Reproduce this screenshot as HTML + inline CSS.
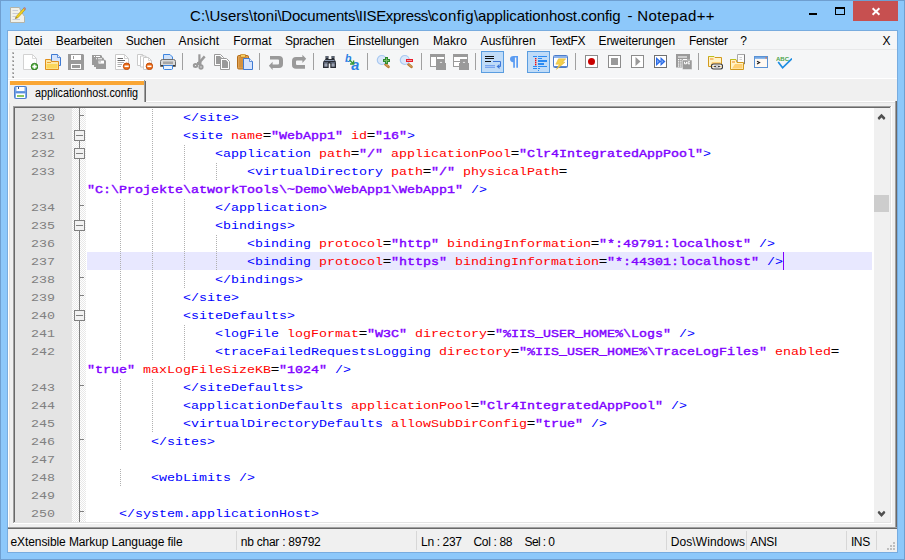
<!DOCTYPE html><html><head><meta charset="utf-8"><title>Notepad++</title><style>

html,body{margin:0;padding:0;}
body{width:905px;height:560px;overflow:hidden;background:#8dc8fa;font-family:"Liberation Sans",sans-serif;}
#win{position:absolute;left:0;top:0;width:905px;height:560px;background:#8dc8fa;overflow:hidden;}
.abs,#win div,#win span.a,#win svg{position:absolute;}
.t{white-space:pre;color:#000;}
#menubar{left:8px;top:31px;width:889px;height:19px;background:#f5f6f7;}
#toolbar{left:8px;top:50px;width:889px;height:28px;background:#f5f6f7;}
#tabbar{left:8px;top:78px;width:889px;height:474px;background:#f0f0f0;}
.m{top:3px;font-size:12px;line-height:15px;white-space:pre;color:#000;}
.sep{top:3px;width:1px;height:17px;background:#a0a0a0;}
.chk{top:1px;width:21px;height:20px;border:1px solid #5a9de0;background:#c0dcf8;}
#ed{left:13px;top:106px;width:879px;height:418px;background:#fff;box-sizing:border-box;}
.row{transform:scaleY(.86);transform-origin:0 12px;left:0;height:18px;width:859px;font-family:"Liberation Mono",monospace;font-size:13.333px;line-height:18px;white-space:pre;color:#000;}
.ln{transform:scaleY(.86);transform-origin:0 12px;left:0;width:40px;text-align:right;color:#808080;font-family:"Liberation Mono",monospace;font-size:13.333px;line-height:18px;height:18px;}
.g{color:#00f}.r{color:#f00}.p{color:#8000ff;-webkit-text-stroke:0.45px #8000ff}.k{color:#000;-webkit-text-stroke:0.45px #000}
.ig{width:1px;height:18px;background:repeating-linear-gradient(to bottom,transparent 0,transparent 1px,#b0b0b0 1px,#b0b0b0 2px);}
.st{top:6px;font-size:12px;line-height:15px;white-space:pre;color:#000;}
.ss{top:2px;width:1px;height:19px;background:#d7d7d7;}

</style></head><body><div id="win">
<div style="left:0;top:0;width:905px;height:1px;background:#6f9fd0"></div>
<div style="left:0;top:0;width:1px;height:560px;background:#6f9fd0"></div>
<div style="left:904px;top:0;width:1px;height:560px;background:#6f9fd0"></div>
<div style="left:0;top:559px;width:905px;height:1px;background:#6f9fd0"></div>
<div style="left:7px;top:30px;width:891px;height:523px;background:#78acdf"></div>
<svg style="left:10px;top:7px" width="16" height="16" viewBox="0 0 16 16"><path d="M0.5 0.5H9.5L10.5 3.5L14.5 9.5V15.5H0.5Z" fill="#f1f1ea" stroke="#b4b4a8" stroke-width="1"/><path d="M2.5 3.5H8M2.5 6.5H9M2.5 9.5H6M2.5 12.5H10" stroke="#c9ccd6" stroke-width="1"/><path d="M5.4 11.6L6.5 9.1L13.6 1.3L15.2 2.7L8 10.7Z" fill="#f2d21e" stroke="#9a7a18" stroke-width="0.5"/><path d="M13.6 1.3L14.5 0.3L16 1.7L15.2 2.7Z" fill="#d88a8a" stroke="#a06060" stroke-width="0.4"/><path d="M5.4 11.6L5.9 10.3L6.7 11Z" fill="#3a2a1a"/></svg>
<div class="t" style="left:190.1px;top:7px;font-size:15px;line-height:18px;letter-spacing:0.06px">C:\Users\toni\</div>
<div class="t" style="left:281.3px;top:7px;font-size:15px;line-height:18px;letter-spacing:-0.203px">Documents\</div>
<div class="t" style="left:358.8px;top:7px;font-size:15px;line-height:18px;letter-spacing:-0.336px">IISExpress\</div>
<div class="t" style="left:431.3px;top:7px;font-size:15px;line-height:18px;letter-spacing:0.429px">config\</div>
<div class="t" style="left:478.0px;top:7px;font-size:15px;line-height:18px;letter-spacing:-0.076px">applicationhost.config</div>
<div class="t" style="left:627.6px;top:7px;font-size:15px;line-height:18px;letter-spacing:0px">-</div>
<div class="t" style="left:637.3px;top:7px;font-size:15px;line-height:18px;letter-spacing:0.385px">Notepad++</div>
<div style="left:809px;top:13px;width:8px;height:2px;background:#000"></div>
<div style="left:835px;top:7px;width:10px;height:8px;box-sizing:border-box;border:1px solid #000;border-top-width:2px"></div>
<div style="left:853px;top:1px;width:45px;height:20px;background:#c75050"></div>
<svg style="left:871px;top:7px" width="10" height="9" viewBox="0 0 10 9"><path d="M1.6 1.2L8.4 7.8M8.4 1.2L1.6 7.8" stroke="#fff" stroke-width="1.9" fill="none"/></svg>
<div id="menubar">
<div class="m" style="left:6.7px;letter-spacing:-0.083px">Datei</div>
<div class="m" style="left:47.8px;letter-spacing:-0.164px">Bearbeiten</div>
<div class="m" style="left:117.8px;letter-spacing:-0.217px">Suchen</div>
<div class="m" style="left:170.5px;letter-spacing:0.207px">Ansicht</div>
<div class="m" style="left:225.2px;letter-spacing:0.066px">Format</div>
<div class="m" style="left:277.1px;letter-spacing:-0.296px">Sprachen</div>
<div class="m" style="left:340.1px;letter-spacing:-0.112px">Einstellungen</div>
<div class="m" style="left:424.9px;letter-spacing:0.172px">Makro</div>
<div class="m" style="left:472.6px;letter-spacing:0.044px">Ausführen</div>
<div class="m" style="left:542.0px;letter-spacing:-0.357px">TextFX</div>
<div class="m" style="left:590.5px;letter-spacing:-0.068px">Erweiterungen</div>
<div class="m" style="left:680.9px;letter-spacing:-0.269px">Fenster</div>
<div class="m" style="left:732.3px;letter-spacing:-0.374px">?</div>
<div class="m" style="left:874.5px;letter-spacing:0.296px">X</div>
</div>
<div style="left:8px;top:49px;width:889px;height:1px;background:#e8e9ea"></div>
<div id="toolbar">
<div style="left:4px;top:2px;width:2px;height:2px;background:#bdbdbd"></div>
<div style="left:5px;top:3px;width:1px;height:1px;background:#8c8c8c"></div>
<div style="left:4px;top:6px;width:2px;height:2px;background:#bdbdbd"></div>
<div style="left:5px;top:7px;width:1px;height:1px;background:#8c8c8c"></div>
<div style="left:4px;top:10px;width:2px;height:2px;background:#bdbdbd"></div>
<div style="left:5px;top:11px;width:1px;height:1px;background:#8c8c8c"></div>
<div style="left:4px;top:14px;width:2px;height:2px;background:#bdbdbd"></div>
<div style="left:5px;top:15px;width:1px;height:1px;background:#8c8c8c"></div>
<div style="left:4px;top:18px;width:2px;height:2px;background:#bdbdbd"></div>
<div style="left:5px;top:19px;width:1px;height:1px;background:#8c8c8c"></div>
<div style="left:4px;top:22px;width:2px;height:2px;background:#bdbdbd"></div>
<div style="left:5px;top:23px;width:1px;height:1px;background:#8c8c8c"></div>
<div style="left:4px;top:26px;width:2px;height:2px;background:#bdbdbd"></div>
<div style="left:5px;top:27px;width:1px;height:1px;background:#8c8c8c"></div>
<div class="chk" style="left:473px"></div>
<div class="chk" style="left:519px"></div>
<div class="sep" style="left:174px"></div>
<div class="sep" style="left:251px"></div>
<div class="sep" style="left:305px"></div>
<div class="sep" style="left:359px"></div>
<div class="sep" style="left:413px"></div>
<div class="sep" style="left:467px"></div>
<div class="sep" style="left:567px"></div>
<div class="sep" style="left:690px"></div>
<svg style="left:14px;top:4px" width="16" height="16" viewBox="0 0 16 16"><path d="M1.5 0.5H10.5L14.5 4.5V15.5H1.5Z" fill="#fff" stroke="#d2d2d2"/><path d="M10.5 0.5V4.5H14.5" fill="none" stroke="#d2d2d2" stroke-width="0.8"/><circle cx="12.5" cy="12.6" r="3.3" fill="#4aa636" stroke="#2c7a1e" stroke-width="0.9"/><path d="M10.3 12.6H14.7M12.5 10.4V14.8" stroke="#fff" stroke-width="1.8"/></svg>
<svg style="left:37px;top:4px" width="16" height="16" viewBox="0 0 16 16"><path d="M6.5 0.5H12.5L15.5 3.5V11.5H6.5Z" fill="#d6e4fb" stroke="#3f7ad2"/><path d="M12.5 0.5V3.5H15.5" fill="#eef4fe" stroke="#3f7ad2" stroke-width="0.8"/><path d="M0.5 5.5H5.5L6.5 7.5H13.5V15.5H0.5Z" fill="#fde9a6" stroke="#e0901c"/><path d="M1.5 10H12.5V14.5H1.5Z" fill="#fbd65a"/><path d="M2 8.5H6" stroke="#f0a030" stroke-width="1"/></svg>
<svg style="left:60px;top:4px" width="16" height="16" viewBox="0 0 16 16"><path d="M0 0H15L16 1V16H0Z" fill="#9a9a9a"/><rect x="3" y="1" width="10" height="5" fill="#fff"/><rect x="5" y="2" width="1" height="3" fill="#9a9a9a"/><rect x="3" y="10" width="10" height="5" fill="#fff"/><rect x="4" y="11" width="8" height="3" fill="#9a9a9a"/></svg>
<svg style="left:83px;top:4px" width="16" height="16" viewBox="0 0 16 16"><path d="M1 1H10L11 2V11H1Z" fill="#9a9a9a"/><rect x="3" y="2" width="1" height="1" fill="#fff"/><rect x="5" y="2" width="4" height="1" fill="#fff"/><path d="M3 3.5H12L13 4.5V13H3Z" fill="#9a9a9a"/><rect x="5" y="4.3" width="1" height="1" fill="#fff"/><rect x="7" y="4.3" width="4" height="1" fill="#fff"/><path d="M5 5.8H14L15 6.8V15H5Z" fill="#9a9a9a"/><rect x="7.5" y="6.6" width="5.5" height="3" fill="#fff"/><rect x="8.5" y="6.6" width="1" height="2" fill="#9a9a9a"/></svg>
<svg style="left:106px;top:4px" width="16" height="16" viewBox="0 0 16 16"><path d="M1.5 0.5H10.5L14.5 4.5V15.5H1.5Z" fill="#fff" stroke="#cacaca"/><path d="M10.5 0.5V4.5H14.5" fill="none" stroke="#cacaca" stroke-width="0.8"/><path d="M3.5 4.5H9M3.5 6.5H11" stroke="#6a6a6a" stroke-width="1"/><path d="M3.5 8.5H10M3.5 10.5H8M3.5 12.5H7" stroke="#b0b0b0" stroke-width="1"/><circle cx="12.6" cy="12.3" r="3.3" fill="#ea6a14" stroke="#c24a06" stroke-width="0.9"/><path d="M10.5 12.3H14.7" stroke="#fff" stroke-width="1.6"/></svg>
<svg style="left:129px;top:4px" width="16" height="16" viewBox="0 0 16 16"><path d="M0.5 0.5H5.5L7.5 2.5V11.5H0.5Z" fill="#fff" stroke="#cacaca"/><path d="M5.5 0.5V2.5H7.5" fill="none" stroke="#cacaca" stroke-width="0.8"/><path d="M3.5 2H8.5L10.5 4V13H3.5Z" fill="#fff" stroke="#cacaca"/><path d="M8.5 2V4H10.5" fill="none" stroke="#cacaca" stroke-width="0.8"/><path d="M6.5 3.5H11.5L14.5 6.5V15.5H6.5Z" fill="#fff" stroke="#cacaca"/><path d="M11.5 3.5V6.5H14.5" fill="none" stroke="#cacaca" stroke-width="0.8"/><circle cx="12.4" cy="12.3" r="3.3" fill="#ea6a14" stroke="#c24a06" stroke-width="0.9"/><path d="M10.3 12.3H14.5" stroke="#fff" stroke-width="1.6"/></svg>
<svg style="left:152px;top:4px" width="16" height="16" viewBox="0 0 16 16"><path d="M3.5 6V0.5H10L12.5 3V6Z" fill="#cfe2fb" stroke="#3f86e0"/><path d="M0.5 7.5Q0.5 5.5 2.5 5.5H13.5Q15.5 5.5 15.5 7.5V12.5H0.5Z" fill="#d9d9d9" stroke="#6e6e6e"/><rect x="3" y="7.5" width="10" height="2.5" fill="#a6a6a6"/><path d="M1 11.5H15" stroke="#3a3a3a" stroke-width="1"/><path d="M3.5 11.5V15L4.5 15.5H11.5L12.5 15V11.5Z" fill="#eaf2fd" stroke="#3f86e0"/></svg>
<svg style="left:183px;top:4px" width="16" height="16" viewBox="0 0 16 16"><g fill="none" stroke="#9a9a9a"><path d="M8.4 0.3V9" stroke-width="2.2"/><path d="M13.7 2.4L6.8 10.4" stroke-width="2.4"/><ellipse cx="4.5" cy="11.4" rx="1.7" ry="1.5" stroke-width="2"/><ellipse cx="10" cy="13" rx="1.6" ry="1.8" stroke-width="2"/></g><path d="M6 8H10.5V11H6Z" fill="#9a9a9a"/></svg>
<svg style="left:206px;top:4px" width="16" height="16" viewBox="0 0 16 16"><path d="M0.5 0.5H6.5L9.5 3.5V11.5H0.5Z" fill="#fff" stroke="#9a9a9a"/><path d="M2 2H6L8 4V10H2Z" fill="#9a9a9a"/><path d="M6.5 4.5H12.5L15.5 7.5V15.5H6.5Z" fill="#fff" stroke="#9a9a9a"/><path d="M8 6H12L14 8V14H8Z" fill="#9a9a9a"/></svg>
<svg style="left:229px;top:4px" width="16" height="16" viewBox="0 0 16 16"><rect x="0.5" y="1.5" width="11" height="13.5" rx="1.3" fill="#dea254" stroke="#b46c18"/><rect x="2" y="3" width="8" height="10.5" fill="#d4913e"/><rect x="3.5" y="0.3" width="5" height="3" rx="0.8" fill="#f8d060" stroke="#b46c18" stroke-width="0.7"/><path d="M6.5 4.5H12.5L15.5 7.5V15.5H6.5Z" fill="#d6e4fd" stroke="#3f7ad2"/><path d="M12.5 4.5V7.5H15.5" fill="#eef4fe" stroke="#3f7ad2" stroke-width="0.8"/></svg>
<svg style="left:260px;top:4px" width="16" height="16" viewBox="0 0 16 16"><path d="M2 2H11Q15 2 15 6V10Q15 14 11 14H4.6V16L0.9 11.8L4.6 7.8V10.4H10Q11 10.4 11 9.4V6.6Q11 5.6 10 5.6H2Z" fill="#9a9a9a"/></svg>
<svg style="left:283px;top:4px" width="16" height="16" viewBox="0 0 16 16"><path d="M11.4 0.8L15.2 4.8L11.4 9V6.6H6Q5 6.6 5 7.6V10Q5 11 6 11H14V14.8H5Q1 14.8 1 11V7Q1 3 5 3H11.4Z" fill="#9a9a9a"/></svg>
<svg style="left:314px;top:4px" width="16" height="16" viewBox="0 0 16 16"><path d="M3.5 2H6.5V5H9.5V2H12.5V5L14 8V14H8.3V9.5H6.7V14H1V8L3.5 5Z" fill="#2a2e36"/><path d="M4 3H6M10 3H12M2.5 6.5H12.5" stroke="#8a98b0" stroke-width="1"/><rect x="2.3" y="9.3" width="3.2" height="3.4" fill="#9aa2b2"/><rect x="9.5" y="9.3" width="3.2" height="3.4" fill="#9aa2b2"/><path d="M1.5 8.5H6M8.5 8.5H13.5" stroke="#5a6478" stroke-width="1"/></svg>
<svg style="left:337px;top:4px" width="16" height="16" viewBox="0 0 16 16"><text x="0" y="7.8" font-family="Liberation Sans,sans-serif" font-style="italic" font-weight="bold" font-size="10.5" fill="#2b80e4">b</text><text x="6.2" y="15.6" font-family="Liberation Sans,sans-serif" font-style="italic" font-weight="bold" font-size="14.5" fill="#2b80e4">a</text><path d="M4.6 6L7.8 9.2M8.6 6.4V10H5" stroke="#3a9a3a" stroke-width="1.4" fill="none"/></svg>
<svg style="left:368px;top:4px" width="16" height="16" viewBox="0 0 16 16"><path d="M9.4 10.2L12.4 12.8" stroke="#b87a30" stroke-width="2.8" stroke-linecap="round"/><path d="M9.8 10.4L12.2 12.4" stroke="#e0b070" stroke-width="0.9" stroke-linecap="round"/><circle cx="5.8" cy="6" r="4.5" fill="#dbe7fa" stroke="#a9c9f1" stroke-width="1.2"/><path d="M7 6.5H14M10.5 3V10" stroke="#2f8a2f" stroke-width="3"/><path d="M8 6.5H13M10.5 4V9" stroke="#78be68" stroke-width="1"/></svg>
<svg style="left:391px;top:4px" width="16" height="16" viewBox="0 0 16 16"><path d="M9.4 10.2L12.4 12.8" stroke="#b87a30" stroke-width="2.8" stroke-linecap="round"/><path d="M9.8 10.4L12.2 12.4" stroke="#e0b070" stroke-width="0.9" stroke-linecap="round"/><circle cx="5.8" cy="6" r="4.5" fill="#dbe7fa" stroke="#a9c9f1" stroke-width="1.2"/><rect x="7" y="5" width="7" height="3" fill="#ea1c2c"/><rect x="8" y="6" width="5" height="1" fill="#f59a9a"/></svg>
<svg style="left:422px;top:4px" width="16" height="16" viewBox="0 0 16 16"><rect x="0" y="0" width="15" height="13" fill="#9a9a9a"/><rect x="1" y="3" width="5" height="9" fill="#fff"/><rect x="7" y="3" width="7" height="9" fill="#fff"/><rect x="5" y="4.5" width="11" height="11.5" fill="#f5f6f7" opacity="0"/><rect x="7" y="5" width="8" height="4" fill="#9a9a9a"/><rect x="7" y="3" width="7" height="2" fill="#fff"/><path d="M8.7 9V7.5Q8.7 5.7 11 5.7Q13.3 5.7 13.3 7.5V9" fill="none" stroke="#9a9a9a" stroke-width="1.6"/><rect x="6" y="9" width="10" height="7" fill="#9a9a9a"/><path d="M9.7 8.8Q11 6.5 12.3 8.8Z" fill="#fff"/></svg>
<svg style="left:445px;top:4px" width="16" height="16" viewBox="0 0 16 16"><rect x="0" y="0" width="15" height="13" fill="#9a9a9a"/><rect x="1" y="3" width="13" height="4" fill="#fff"/><rect x="1" y="8" width="13" height="4" fill="#fff"/><rect x="7" y="5" width="8" height="4" fill="#9a9a9a"/><rect x="7" y="3" width="7" height="2" fill="#fff"/><path d="M8.7 9V7.5Q8.7 5.7 11 5.7Q13.3 5.7 13.3 7.5V9" fill="none" stroke="#9a9a9a" stroke-width="1.6"/><rect x="6" y="9" width="10" height="7" fill="#9a9a9a"/><path d="M9.7 8.8Q11 6.5 12.3 8.8Z" fill="#fff"/></svg>
<svg style="left:477px;top:5px" width="16" height="16" viewBox="0 0 16 16"><path d="M0 1.5H9M0 3.5H9M0 6.5H6" stroke="#111" stroke-width="1.2"/><path d="M8 6.5H15.5V11.5H13" fill="none" stroke="#3f78d8" stroke-width="1"/><path d="M11.5 11.5L14.5 9V14Z" fill="#3f78d8"/><rect x="0" y="10" width="10" height="3" fill="#78a6ee"/><rect x="0" y="11" width="10" height="1" fill="#a9c6f5"/></svg>
<svg style="left:499px;top:4px" width="16" height="16" viewBox="0 0 16 16"><path d="M6.5 2H11V13.8H9.3V3.6H7.9V13.8H6.2V8.2Q3 8 3 5Q3 2 6.5 2Z" fill="#5b9cf2"/></svg>
<svg style="left:523px;top:5px" width="16" height="16" viewBox="0 0 16 16"><g fill="#2a8af2"><rect x="2" y="1" width="4" height="1"/><rect x="7" y="1" width="9" height="1"/><rect x="7" y="3" width="4" height="1"/><rect x="7" y="5" width="9" height="2"/><rect x="7" y="8" width="6" height="2"/><rect x="2" y="11" width="4" height="1"/><rect x="7" y="11" width="9" height="1"/><rect x="2" y="13" width="4" height="1"/><rect x="7" y="13" width="2" height="1"/><rect x="7" y="15" width="1" height="1"/></g><g fill="#ee1010"><rect x="4" y="3" width="1.4" height="1.4"/><rect x="4" y="5" width="1.4" height="1.4"/><rect x="4" y="7" width="1.4" height="1.4"/><rect x="4" y="9" width="1.4" height="1.4"/></g></svg>
<svg style="left:545px;top:4px" width="16" height="16" viewBox="0 0 16 16"><rect x="0.5" y="1.5" width="14" height="12" rx="1" fill="#fff" stroke="#4c7cca"/><rect x="1" y="2" width="13" height="2" fill="#8cb2ea"/><path d="M1 12.5H14" stroke="#5a86d0"/><path d="M5.5 4.8H12.8L9.6 8.2H12L3.4 15.4L6.4 10.2H2.8Z" fill="#f4cf4c" stroke="#dcae30" stroke-width="0.5"/></svg>
<svg style="left:576px;top:4px" width="16" height="16" viewBox="0 0 16 16"><rect x="1.5" y="1.5" width="12" height="12" fill="#fff" stroke="#8c8c8c"/><circle cx="7.5" cy="7.5" r="3.5" fill="#c80000"/></svg>
<svg style="left:599px;top:4px" width="16" height="16" viewBox="0 0 16 16"><rect x="1.5" y="1.5" width="12" height="12" fill="#fff" stroke="#8c8c8c"/><rect x="4" y="4" width="7" height="7" fill="#9a9a9a"/></svg>
<svg style="left:622px;top:4px" width="16" height="16" viewBox="0 0 16 16"><rect x="1.5" y="1.5" width="12" height="12" fill="#fff" stroke="#8c8c8c"/><path d="M5.5 3V12L10.5 7.5Z" fill="#9a9a9a"/></svg>
<svg style="left:645px;top:4px" width="16" height="16" viewBox="0 0 16 16"><rect x="1.5" y="1.5" width="12" height="12" fill="#fff" stroke="#707070"/><path d="M3 3V12L8 7.5ZM7.5 3V12L12.5 7.5Z" fill="#2a6ae6"/><path d="M4 5.5V9.5L6 7.5ZM8.5 5.5V9.5L10.5 7.5Z" fill="#7aa8f4"/></svg>
<svg style="left:668px;top:4px" width="16" height="16" viewBox="0 0 16 16"><rect x="0" y="0" width="14" height="13.5" fill="#9a9a9a"/><rect x="2" y="2.5" width="9" height="1" fill="#fff"/><g fill="#fff"><rect x="2" y="5" width="1.3" height="1.3"/><rect x="4.2" y="5" width="1.3" height="1.3"/><rect x="2" y="7.2" width="1.3" height="1.3"/><rect x="4.2" y="7.2" width="1.3" height="1.3"/><rect x="2" y="9.4" width="1.3" height="1.3"/><rect x="4.2" y="9.4" width="1.3" height="1.3"/><rect x="2" y="11.4" width="1.3" height="1.3"/><rect x="4.2" y="11.4" width="1.3" height="1.3"/><rect x="7" y="5" width="4" height="1"/></g><rect x="6.5" y="6" width="9.5" height="9.5" fill="#9a9a9a" stroke="#f5f6f7" stroke-width="0.5"/><path d="M8.5 7.8V9.8H10.5V7.8M14 7.8H12V9.8H14" stroke="#fff" stroke-width="1" fill="none"/></svg>
<svg style="left:699px;top:4px" width="16" height="16" viewBox="0 0 16 16"><path d="M1.5 2.5H7L8 3.5H14.5V12.5H1.5Z" fill="#fff3c8" stroke="#d29a1e"/><path d="M1.5 2.5H7" stroke="#bcc01c" stroke-width="1"/><path d="M5 8H13.5V11.5H3.5Z" fill="#ffc65e" opacity="0.75"/><path d="M3 5H6.5" stroke="#f59a3c" stroke-width="1.2"/><rect x="4.4" y="10" width="11.2" height="5" rx="2.2" fill="#f4f4f4" stroke="#3c3c3c" stroke-width="1.1"/><rect x="7" y="11.7" width="6" height="1.6" rx="0.8" fill="#3c3c3c"/><rect x="9" y="12.1" width="2" height="0.8" fill="#fff"/><rect x="5.6" y="12" width="1" height="1" fill="#e0a020"/><rect x="13.4" y="12" width="1" height="1" fill="#e0a020"/></svg>
<svg style="left:722px;top:4px" width="16" height="16" viewBox="0 0 16 16"><path d="M7.5 0.5H14.5V10H7.5Z" fill="#fbfbfb" stroke="#a8a8a8"/><path d="M14.5 0.5V10" stroke="#7c7c7c"/><path d="M9.5 3.5H12M9.5 5.5H12" stroke="#d0d0d0"/><path d="M0.5 5.5H6L7 8.5H13.5V15.5H0.5Z" fill="#fff3c8" stroke="#d29a1e"/><path d="M0.5 5.5H6" stroke="#bcc01c"/><path d="M5 10H12.5V14.5H2Z" fill="#ffc65e" opacity="0.8"/><path d="M2 8H5" stroke="#f59a3c" stroke-width="1.2"/></svg>
<svg style="left:745px;top:4px" width="16" height="16" viewBox="0 0 16 16"><rect x="1.5" y="2.5" width="13" height="11" fill="#fff9f2" stroke="#5a92d4"/><rect x="2" y="3" width="12" height="1.8" fill="#74a8e6"/><rect x="12.5" y="3.2" width="1.3" height="1.3" fill="#f07030"/><path d="M4 7.2L6.6 8.6L4 10" fill="none" stroke="#222" stroke-width="1.1"/></svg>
<svg style="left:768px;top:4px" width="16" height="16" viewBox="0 0 16 16"><text x="0" y="6.8" font-family="Liberation Sans,sans-serif" font-weight="bold" font-size="6.2" fill="#4aa44a" textLength="13" lengthAdjust="spacingAndGlyphs">ABC</text><path d="M2.2 8L6.6 13.8L16 4.6" fill="none" stroke="#1c8ce2" stroke-width="1.7"/></svg>
</div>
<div id="tabbar">
<div style="left:0;top:0;width:889px;height:1px;background:#fff"></div>
<div style="left:0;top:23px;width:889px;height:1px;background:#fff"></div>
<div style="left:1px;top:24px;width:886px;height:1px;background:#e3e3e3"></div>
<div style="left:1px;top:24px;width:1px;height:425px;background:#e3e3e3"></div>
<div style="left:0;top:2px;width:1px;height:447px;background:#fff"></div>
<div style="left:887px;top:23px;width:1px;height:428px;background:#a0a0a0"></div>
<div style="left:888px;top:23px;width:1px;height:428px;background:#696969"></div>
<div style="left:0;top:449px;width:889px;height:1px;background:#a0a0a0"></div>
<div style="left:0;top:450px;width:889px;height:1px;background:#696969"></div>
<div style="left:1px;top:2px;width:137px;height:23px;background:#f0f0f0"></div>
<div style="left:1px;top:2px;width:135px;height:1px;background:#fff"></div>
<div style="left:2px;top:3px;width:134px;height:4px;background:#faa634"></div>
<div style="left:136px;top:2px;width:1px;height:22px;background:#a0a0a0"></div>
<div style="left:137px;top:3px;width:1px;height:21px;background:#696969"></div>
<svg style="left:6px;top:8px" width="13" height="13" viewBox="0 0 13 13"><rect x="0.5" y="0.5" width="12" height="12" rx="1" fill="#7aa8e8" stroke="#4f80cc"/><rect x="2.5" y="1" width="8" height="4" fill="#fff"/><rect x="4" y="1" width="1" height="2" fill="#35508a"/><rect x="1.5" y="5.5" width="10" height="1.5" fill="#5a8edc"/><rect x="2" y="7.5" width="9" height="4.5" fill="#fff"/><rect x="3" y="9" width="7" height="2" fill="#8cc860"/></svg>
<div class="t" style="left:26.5px;top:8.3px;font-size:12px;line-height:15px;transform:scaleX(.9);transform-origin:0 0;letter-spacing:-0.044px">applicationhost.config</div>
</div>
<div id="ed">
<div style="left:0;top:0;width:879px;height:1px;background:#a0a0a0"></div>
<div style="left:0;top:0;width:1px;height:418px;background:#a0a0a0"></div>
<div style="left:1px;top:1px;width:877px;height:1px;background:#696969"></div>
<div style="left:1px;top:1px;width:1px;height:416px;background:#696969"></div>
<div style="left:0;top:417px;width:879px;height:1px;background:#fff"></div>
<div style="left:878px;top:0;width:1px;height:418px;background:#fff"></div>
<div style="left:1px;top:416px;width:877px;height:1px;background:#e3e3e3"></div>
<div style="left:877px;top:1px;width:1px;height:416px;background:#e3e3e3"></div>
<div id="in" style="left:2px;top:2px;width:875px;height:414px;overflow:hidden;background:#fff">
<div style="left:0;top:0;width:57px;height:414px;background:#e4e4e4"></div>
<div style="left:57px;top:0;width:14px;height:414px;background:repeating-conic-gradient(#fff 0 25%,#e8e8e8 0 50%) 0 0/2px 2px"></div>
<div style="left:859px;top:0;width:16px;height:414px;background:#f0f0f0"></div>
<div style="left:859px;top:87px;width:15px;height:17px;background:#cdcdcd"></div>
<svg style="left:859px;top:0" width="16" height="17" viewBox="0 0 16 17"><path d="M7.5 5.8L11.2 9.6L11.2 10.6L9.9 11.9L7.5 9.5L5.1 11.9L3.8 10.6L3.8 9.6Z" fill="#505050"/></svg>
<svg style="left:859px;top:397px" width="16" height="17" viewBox="0 0 16 17"><path d="M7.5 11.9L11.2 8.1L11.2 7.1L9.9 5.8L7.5 8.2L5.1 5.8L3.8 7.1L3.8 8.1Z" fill="#505050"/></svg>
<div class="ln" style="top:1px">230</div>
<div class="ig" style="left:105px;top:0px"></div>
<div class="ig" style="left:137px;top:0px"></div>
<div class="row" style="left:168px;top:1px"><span class="g">&lt;/site</span><span class="g">&gt;</span></div>
<div class="ln" style="top:19px">231</div>
<div class="ig" style="left:105px;top:18px"></div>
<div class="ig" style="left:137px;top:18px"></div>
<div class="row" style="left:168px;top:19px"><span class="g">&lt;site</span> <span class="r">name</span><span class="k">=</span><span class="p">"WebApp1"</span> <span class="r">id</span><span class="k">=</span><span class="p">"16"</span><span class="g">&gt;</span></div>
<div class="ln" style="top:37px">232</div>
<div class="ig" style="left:105px;top:36px"></div>
<div class="ig" style="left:137px;top:36px"></div>
<div class="ig" style="left:169px;top:36px"></div>
<div class="row" style="left:200px;top:37px"><span class="g">&lt;application</span> <span class="r">path</span><span class="k">=</span><span class="p">"/"</span> <span class="r">applicationPool</span><span class="k">=</span><span class="p">"Clr4IntegratedAppPool"</span><span class="g">&gt;</span></div>
<div class="ln" style="top:55px">233</div>
<div class="ig" style="left:105px;top:54px"></div>
<div class="ig" style="left:137px;top:54px"></div>
<div class="ig" style="left:169px;top:54px"></div>
<div class="ig" style="left:201px;top:54px"></div>
<div class="row" style="left:232px;top:55px"><span class="g">&lt;virtualDirectory</span> <span class="r">path</span><span class="k">=</span><span class="p">"/"</span> <span class="r">physicalPath</span><span class="k">=</span></div>
<div class="row" style="left:72px;top:73px"><span class="p">"C:\Projekte\atworkTools\~Demo\WebApp1\WebApp1"</span> <span class="g">/&gt;</span></div>
<div class="ln" style="top:91px">234</div>
<div class="ig" style="left:105px;top:90px"></div>
<div class="ig" style="left:137px;top:90px"></div>
<div class="ig" style="left:169px;top:90px"></div>
<div class="row" style="left:200px;top:91px"><span class="g">&lt;/application</span><span class="g">&gt;</span></div>
<div class="ln" style="top:109px">235</div>
<div class="ig" style="left:105px;top:108px"></div>
<div class="ig" style="left:137px;top:108px"></div>
<div class="ig" style="left:169px;top:108px"></div>
<div class="row" style="left:200px;top:109px"><span class="g">&lt;bindings</span><span class="g">&gt;</span></div>
<div class="ln" style="top:127px">236</div>
<div class="ig" style="left:105px;top:126px"></div>
<div class="ig" style="left:137px;top:126px"></div>
<div class="ig" style="left:169px;top:126px"></div>
<div class="ig" style="left:201px;top:126px"></div>
<div class="row" style="left:232px;top:127px"><span class="g">&lt;binding</span> <span class="r">protocol</span><span class="k">=</span><span class="p">"http"</span> <span class="r">bindingInformation</span><span class="k">=</span><span class="p">"*:49791:localhost"</span> <span class="g">/&gt;</span></div>
<div style="left:72px;top:144px;width:785px;height:18px;background:#e8e8ff"></div>
<div class="ln" style="top:145px">237</div>
<div class="ig" style="left:105px;top:144px"></div>
<div class="ig" style="left:137px;top:144px"></div>
<div class="ig" style="left:169px;top:144px"></div>
<div class="ig" style="left:201px;top:144px"></div>
<div class="row" style="left:232px;top:145px"><span class="g">&lt;binding</span> <span class="r">protocol</span><span class="k">=</span><span class="p">"https"</span> <span class="r">bindingInformation</span><span class="k">=</span><span class="p">"*:44301:localhost"</span> <span class="g">/&gt;</span></div>
<div class="ln" style="top:163px">238</div>
<div class="ig" style="left:105px;top:162px"></div>
<div class="ig" style="left:137px;top:162px"></div>
<div class="ig" style="left:169px;top:162px"></div>
<div class="row" style="left:200px;top:163px"><span class="g">&lt;/bindings</span><span class="g">&gt;</span></div>
<div class="ln" style="top:181px">239</div>
<div class="ig" style="left:105px;top:180px"></div>
<div class="ig" style="left:137px;top:180px"></div>
<div class="row" style="left:168px;top:181px"><span class="g">&lt;/site</span><span class="g">&gt;</span></div>
<div class="ln" style="top:199px">240</div>
<div class="ig" style="left:105px;top:198px"></div>
<div class="ig" style="left:137px;top:198px"></div>
<div class="row" style="left:168px;top:199px"><span class="g">&lt;siteDefaults</span><span class="g">&gt;</span></div>
<div class="ln" style="top:217px">241</div>
<div class="ig" style="left:105px;top:216px"></div>
<div class="ig" style="left:137px;top:216px"></div>
<div class="ig" style="left:169px;top:216px"></div>
<div class="row" style="left:200px;top:217px"><span class="g">&lt;logFile</span> <span class="r">logFormat</span><span class="k">=</span><span class="p">"W3C"</span> <span class="r">directory</span><span class="k">=</span><span class="p">"%IIS_USER_HOME%\Logs"</span> <span class="g">/&gt;</span></div>
<div class="ln" style="top:235px">242</div>
<div class="ig" style="left:105px;top:234px"></div>
<div class="ig" style="left:137px;top:234px"></div>
<div class="ig" style="left:169px;top:234px"></div>
<div class="row" style="left:200px;top:235px"><span class="g">&lt;traceFailedRequestsLogging</span> <span class="r">directory</span><span class="k">=</span><span class="p">"%IIS_USER_HOME%\TraceLogFiles"</span> <span class="r">enabled</span><span class="k">=</span></div>
<div class="row" style="left:72px;top:253px"><span class="p">"true"</span> <span class="r">maxLogFileSizeKB</span><span class="k">=</span><span class="p">"1024"</span> <span class="g">/&gt;</span></div>
<div class="ln" style="top:271px">243</div>
<div class="ig" style="left:105px;top:270px"></div>
<div class="ig" style="left:137px;top:270px"></div>
<div class="row" style="left:168px;top:271px"><span class="g">&lt;/siteDefaults</span><span class="g">&gt;</span></div>
<div class="ln" style="top:289px">244</div>
<div class="ig" style="left:105px;top:288px"></div>
<div class="ig" style="left:137px;top:288px"></div>
<div class="row" style="left:168px;top:289px"><span class="g">&lt;applicationDefaults</span> <span class="r">applicationPool</span><span class="k">=</span><span class="p">"Clr4IntegratedAppPool"</span> <span class="g">/&gt;</span></div>
<div class="ln" style="top:307px">245</div>
<div class="ig" style="left:105px;top:306px"></div>
<div class="ig" style="left:137px;top:306px"></div>
<div class="row" style="left:168px;top:307px"><span class="g">&lt;virtualDirectoryDefaults</span> <span class="r">allowSubDirConfig</span><span class="k">=</span><span class="p">"true"</span> <span class="g">/&gt;</span></div>
<div class="ln" style="top:325px">246</div>
<div class="ig" style="left:105px;top:324px"></div>
<div class="row" style="left:136px;top:325px"><span class="g">&lt;/sites</span><span class="g">&gt;</span></div>
<div class="ln" style="top:343px">247</div>
<div class="ln" style="top:361px">248</div>
<div class="ig" style="left:105px;top:360px"></div>
<div class="row" style="left:136px;top:361px"><span class="g">&lt;webLimits</span> <span class="g">/&gt;</span></div>
<div class="ln" style="top:379px">249</div>
<div class="ln" style="top:397px">250</div>
<div class="row" style="left:104px;top:397px"><span class="g">&lt;/system.applicationHost</span><span class="g">&gt;</span></div>
<div style="left:64px;top:0;width:1px;height:414px;background:#808080"></div>
<div style="left:65px;top:7px;width:4px;height:1px;background:#808080"></div>
<div style="left:59px;top:22px;width:11px;height:11px;box-sizing:border-box;border:1px solid #808080;background:#f2f2f2"></div>
<div style="left:61px;top:27px;width:7px;height:1px;background:#808080"></div>
<div style="left:59px;top:40px;width:11px;height:11px;box-sizing:border-box;border:1px solid #808080;background:#f2f2f2"></div>
<div style="left:61px;top:45px;width:7px;height:1px;background:#808080"></div>
<div style="left:65px;top:97px;width:4px;height:1px;background:#808080"></div>
<div style="left:59px;top:112px;width:11px;height:11px;box-sizing:border-box;border:1px solid #808080;background:#f2f2f2"></div>
<div style="left:61px;top:117px;width:7px;height:1px;background:#808080"></div>
<div style="left:65px;top:169px;width:4px;height:1px;background:#808080"></div>
<div style="left:65px;top:187px;width:4px;height:1px;background:#808080"></div>
<div style="left:59px;top:202px;width:11px;height:11px;box-sizing:border-box;border:1px solid #808080;background:#f2f2f2"></div>
<div style="left:61px;top:207px;width:7px;height:1px;background:#808080"></div>
<div style="left:65px;top:277px;width:4px;height:1px;background:#808080"></div>
<div style="left:65px;top:331px;width:4px;height:1px;background:#808080"></div>
<div style="left:65px;top:403px;width:4px;height:1px;background:#808080"></div>
<div style="left:768px;top:144px;width:1px;height:18px;background:#8000ff"></div>
</div></div>
<div id="status" style="left:8px;top:529px;width:889px;height:23px;background:#f0f0f0">
<div class="st" style="left:2.5px;letter-spacing:-0.09px">eXtensible Markup Language file</div>
<div class="st" style="left:232.8px;letter-spacing:-0.246px">nb char : 89792</div>
<div class="st" style="left:413.1px;letter-spacing:-0.371px">Ln : 237</div>
<div class="st" style="left:465.5px;letter-spacing:-0.332px">Col : 88</div>
<div class="st" style="left:516.5px;letter-spacing:-0.603px">Sel : 0</div>
<div class="st" style="left:662.8px;letter-spacing:0.077px">Dos\Windows</div>
<div class="st" style="left:742.2px;letter-spacing:-0.252px">ANSI</div>
<div class="st" style="left:842.9px;letter-spacing:-0.368px">INS</div>
<div class="ss" style="left:228px"></div>
<div class="ss" style="left:408px"></div>
<div class="ss" style="left:658px"></div>
<div class="ss" style="left:738px"></div>
<div class="ss" style="left:838px"></div>
<div class="ss" style="left:868px"></div>
<div style="left:885px;top:13px;width:2px;height:2px;background:#bfbfbf"></div>
<div style="left:882px;top:16px;width:2px;height:2px;background:#bfbfbf"></div>
<div style="left:885px;top:16px;width:2px;height:2px;background:#bfbfbf"></div>
<div style="left:879px;top:19px;width:2px;height:2px;background:#bfbfbf"></div>
<div style="left:882px;top:19px;width:2px;height:2px;background:#bfbfbf"></div>
<div style="left:885px;top:19px;width:2px;height:2px;background:#bfbfbf"></div>
</div>
</div></body></html>
